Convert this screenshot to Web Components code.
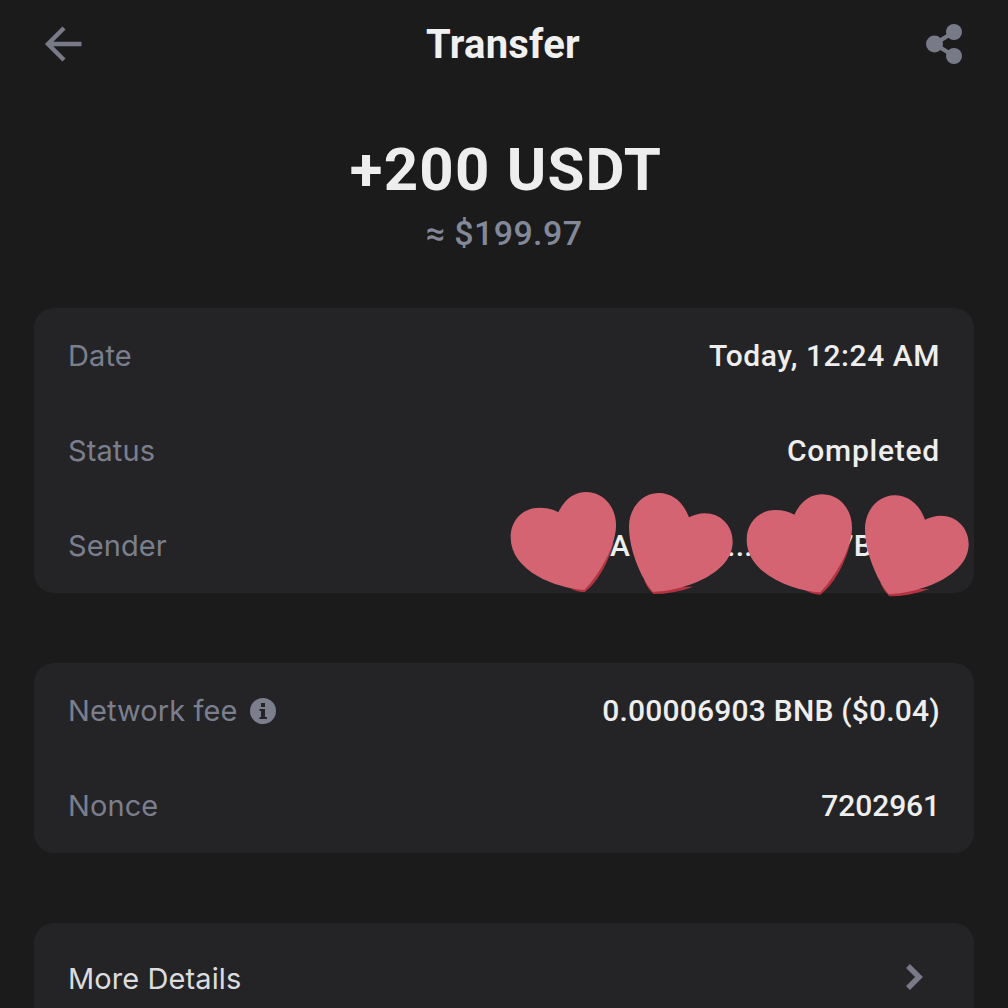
<!DOCTYPE html>
<html>
<head>
<meta charset="utf-8">
<title>Transfer</title>
<style>
html, body {
    margin: 0;
    height: 1008px;
    overflow: hidden;
    background: #1b1b1c;
}
</style>
</head>
<body>
<transfer-page>
    <top-bar title="Transfer"></top-bar>
    <amount-head amount="+200 USDT" fiat="≈ $199.97"></amount-head>
    <info-card>
        <info-row label="Date" value="Today, 12:24 AM" style="--track: .55px"></info-row>
        <info-row label="Status" value="Completed" style="--track: .75px"></info-row>
        <info-row label="Sender" value="0x6bA93f720...c9d5e7B3e4a" style="--track: .2px"></info-row>
        <heart-strip></heart-strip>
    </info-card>
    <info-card>
        <info-row label="Network fee" value="0.00006903 BNB ($0.04)" hint style="--track: .2px"></info-row>
        <info-row label="Nonce" value="7202961" style="--track: -.1px"></info-row>
    </info-card>
    <info-card>
        <link-row label="More Details"></link-row>
    </info-card>
</transfer-page>

<script>
const pageTemplate = document.createElement("template");
pageTemplate.innerHTML = `
<style>
:host {
    display: flex;
    flex-flow: column nowrap;
    height: 1008px;
    overflow: hidden;
    padding: 0 34px;
    box-sizing: border-box;
    font-family: Roboto, "Liberation Sans", sans-serif;
}
</style>
<slot></slot>
`;

class TransferPage extends HTMLElement {
    constructor() {
        super();
        this.attachShadow({mode: "open"});
        this.shadowRoot.appendChild(pageTemplate.content.cloneNode(true));
    }
}

const barTemplate = document.createElement("template");
barTemplate.innerHTML = `
<style>
:host {
    display: flex;
    flex-flow: row nowrap;
    flex: none;
    justify-content: space-between;
    align-items: center;
    height: 88px;
    padding: 0 10px;
}
h1 {
    margin: 0 2px 0 0;
    font-size: 40px;
    font-weight: 700;
    letter-spacing: .25px;
    color: #f0f0f0;
}
svg {
    display: block;
    width: 40px;
    height: 44px;
}
</style>
<svg viewBox="0 0 40 44">
    <path d="M37.5 22H5M20 6 4 22l16 16" fill="none" stroke="#787a88" stroke-width="4.4"/>
</svg>
<h1></h1>
<svg viewBox="0 0 40 44">
    <path d="M10.500 22 30 10M10.500 22 30 34" fill="none" stroke="#787a88" stroke-width="4.400"/>
    <circle cx="10.500" cy="22" r="8.500" fill="#787a88"/>
    <circle cx="30" cy="10" r="8" fill="#787a88"/>
    <circle cx="30" cy="34" r="8" fill="#787a88"/>
</svg>
`;

class TopBar extends HTMLElement {
    constructor() {
        super();
        this.attachShadow({mode: "open"});
        this.shadowRoot.appendChild(barTemplate.content.cloneNode(true));
    }

    connectedCallback() {
        this.shadowRoot.querySelector("h1").textContent = this.getAttribute("title");
    }
}

const amountTemplate = document.createElement("template");
amountTemplate.innerHTML = `
<style>
:host {
    display: flex;
    flex-flow: column nowrap;
    flex: none;
    align-items: center;
    height: 220px;
    box-sizing: border-box;
    padding-top: 48px;
}
#amount {
    font-size: 60px;
    line-height: 68px;
    font-weight: 700;
    letter-spacing: 1.2px;
    margin-left: 4px;
    color: #eeeeee;
}
#fiat {
    font-size: 34px;
    line-height: 40px;
    margin-top: 9px;
    font-weight: 500;
    letter-spacing: .4px;
    color: #838998;
}
</style>
<div id="amount"></div>
<div id="fiat"></div>
`;

class AmountHead extends HTMLElement {
    constructor() {
        super();
        this.attachShadow({mode: "open"});
        this.shadowRoot.appendChild(amountTemplate.content.cloneNode(true));
    }

    connectedCallback() {
        this.shadowRoot.querySelector("#amount").textContent = this.getAttribute("amount");
        this.shadowRoot.querySelector("#fiat").textContent = this.getAttribute("fiat");
    }
}

const cardTemplate = document.createElement("template");
cardTemplate.innerHTML = `
<style>
:host {
    display: block;
    position: relative;
    background: #242427;
    border-radius: 20px;
    padding: 0 34px;
    margin-bottom: 70px;
    flex: none;
}
</style>
<slot></slot>
`;

class InfoCard extends HTMLElement {
    constructor() {
        super();
        this.attachShadow({mode: "open"});
        this.shadowRoot.appendChild(cardTemplate.content.cloneNode(true));
    }
}

const rowTemplate = document.createElement("template");
rowTemplate.innerHTML = `
<style>
:host {
    display: flex;
    flex-flow: row nowrap;
    justify-content: space-between;
    align-items: center;
    height: 95px;
}
#label {
    display: flex;
    align-items: center;
    gap: 12px;
    font-family: Inter, "Noto Sans", sans-serif;
    font-size: 29px;
    letter-spacing: .1px;
    color: #7b7f8d;
}
#value {
    font-size: 30px;
    font-weight: 500;
    letter-spacing: var(--track, 0);
    color: #eeeeee;
}
svg {
    display: block;
    width: 26px;
    height: 26px;
}
</style>
<div id="label"><span></span></div>
<div id="value"></div>
`;

class InfoRow extends HTMLElement {
    constructor() {
        super();
        this.attachShadow({mode: "open"});
        this.shadowRoot.appendChild(rowTemplate.content.cloneNode(true));
    }

    connectedCallback() {
        this.shadowRoot.querySelector("#label span").textContent = this.getAttribute("label");
        this.shadowRoot.querySelector("#value").textContent = this.getAttribute("value");
        if(this.hasAttribute("hint")) {
            this.shadowRoot.querySelector("#label").insertAdjacentHTML("beforeend", `
                <svg viewBox="0 0 26 26">
                    <circle cx="13" cy="13" r="13" fill="#7b7f8d"/>
                    <rect x="11" y="5" width="4" height="4" fill="#242427"/>
                    <path d="M9.500 11H15v8h2v2H9.500v-2h1.500v-6H9.500z" fill="#242427"/>
                </svg>`);
        }
    }
}

const linkTemplate = document.createElement("template");
linkTemplate.innerHTML = `
<style>
:host {
    display: flex;
    flex-flow: row nowrap;
    justify-content: space-between;
    align-items: center;
    height: 110px;
    padding-right: 16px;
}
span {
    font-family: Inter, "Noto Sans", sans-serif;
    font-size: 29px;
    letter-spacing: .1px;
    color: #dcdcde;
}
svg {
    display: block;
    width: 20px;
    height: 28px;
    position: relative;
    top: -1px;
}
</style>
<span></span>
<svg viewBox="0 0 20 28">
    <path d="M4 3 15 14 4 25" fill="none" stroke="#787a88" stroke-width="5.500"/>
</svg>
`;

class LinkRow extends HTMLElement {
    constructor() {
        super();
        this.attachShadow({mode: "open"});
        this.shadowRoot.appendChild(linkTemplate.content.cloneNode(true));
    }

    connectedCallback() {
        this.shadowRoot.querySelector("span").textContent = this.getAttribute("label");
    }
}

const heartLeft = "M205 97C225 55 255 36 290 36C345 38 380 85 378 140C376 200 330 280 283 330C200 325 62 275 62 172C62 120 100 83 148 83C170 83 190 88 205 97Z";
const shadeLeft = "M372 185C355 250 320 310 283 337C265 335 250 332 235 322L283 320Z";
const heartRight = "M597 112C580 65 545 38 505 39C455 40 417 85 417 140C417 205 450 290 488 335C570 335 728 285 728 185C728 135 690 100 645 100C628 100 610 105 597 112Z";
const shadeRight = "M462 300 C470 320 480 332 490 342C530 342 570 335 610 320L488 320Z";

const heartTemplate = document.createElement("template");
heartTemplate.innerHTML = `
<style>
:host {
    display: block;
    position: absolute;
    left: 456px;
    top: 172px;
    width: 500px;
    height: 125px;
}
svg {
    display: block;
    width: 500px;
    height: 125px;
}
</style>
<svg viewBox="0 0 1500 375">
    <g id="one"></g>
    <g transform="translate(708 7)" id="two"></g>
</svg>
`;

class HeartStrip extends HTMLElement {
    constructor() {
        super();
        this.attachShadow({mode: "open"});
        this.shadowRoot.appendChild(heartTemplate.content.cloneNode(true));
    }

    connectedCallback() {
        const pair = `
            <path d="${shadeLeft}" fill="#b33440"/>
            <path d="${shadeRight}" fill="#b33440"/>
            <path d="${heartLeft}" fill="#d56473"/>
            <path d="${heartRight}" fill="#d56473"/>`;
        this.shadowRoot.querySelector("#one").innerHTML = pair;
        this.shadowRoot.querySelector("#two").innerHTML = pair;
    }
}

customElements.define("transfer-page", TransferPage);
customElements.define("top-bar", TopBar);
customElements.define("amount-head", AmountHead);
customElements.define("info-card", InfoCard);
customElements.define("info-row", InfoRow);
customElements.define("link-row", LinkRow);
customElements.define("heart-strip", HeartStrip);
</script>
</body>
</html>
